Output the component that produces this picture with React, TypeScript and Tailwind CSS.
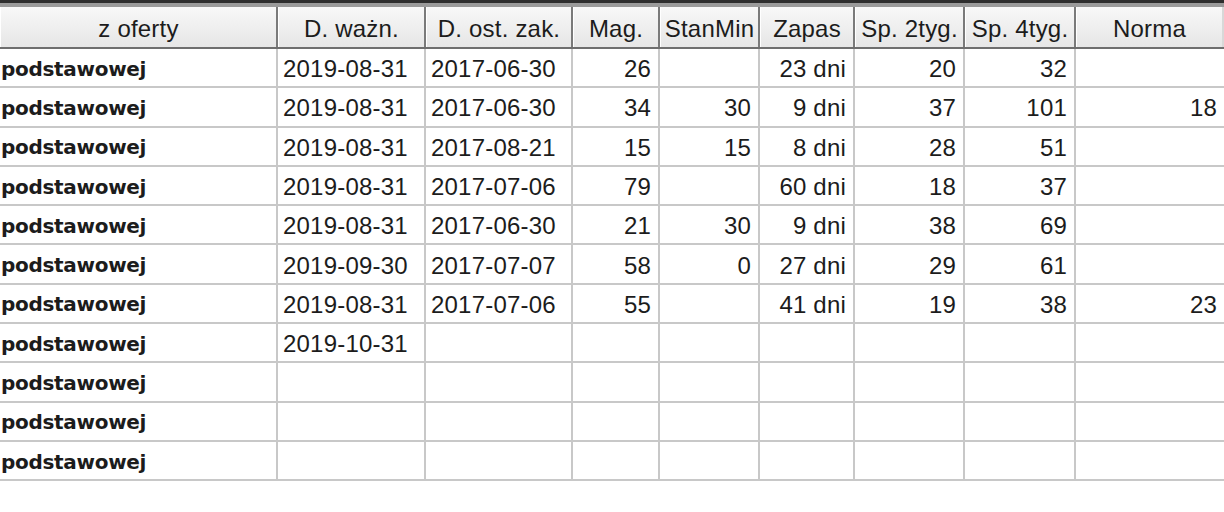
const cols = [
  { label: "z oferty", w: "w-[278px]" },
  { label: "D. ważn.", w: "w-[148px]" },
  { label: "D. ost. zak.", w: "w-[147px]" },
  { label: "Mag.", w: "w-[87px]" },
  { label: "StanMin", w: "w-[100px]" },
  { label: "Zapas", w: "w-[95px]" },
  { label: "Sp. 2tyg.", w: "w-[110px]" },
  { label: "Sp. 4tyg.", w: "w-[111px]" },
  { label: "Norma", w: "w-[148px]" },
];

type Row = string[];

const rows: Row[] = [
  ["2019-08-31", "2017-06-30", "26", "", "23 dni", "20", "32", ""],
  ["2019-08-31", "2017-06-30", "34", "30", "9 dni", "37", "101", "18"],
  ["2019-08-31", "2017-08-21", "15", "15", "8 dni", "28", "51", ""],
  ["2019-08-31", "2017-07-06", "79", "", "60 dni", "18", "37", ""],
  ["2019-08-31", "2017-06-30", "21", "30", "9 dni", "38", "69", ""],
  ["2019-09-30", "2017-07-07", "58", "0", "27 dni", "29", "61", ""],
  ["2019-08-31", "2017-07-06", "55", "", "41 dni", "19", "38", "23"],
  ["2019-10-31", "", "", "", "", "", "", ""],
  ["", "", "", "", "", "", "", ""],
  ["", "", "", "", "", "", "", ""],
  ["", "", "", "", "", "", "", ""],
];

const App = () => {
  return (
    <div className="w-[1224px] h-[512px] bg-white overflow-hidden font-['Liberation_Sans',Arial,sans-serif] text-[24px] tracking-[0.2px] text-[#1c1c1c]">
      <div className="h-[3px] bg-[#2e2e2e]" />
      <div className="h-[4px] bg-[#9a9a9a]" />
      {/* header */}
      <div className="flex h-[42px] bg-gradient-to-b from-[#f8f8f8] to-[#e6e6e6] border-b-2 border-[#6e6e6e]">
        {cols.map((c, i) => (
          <div
            key={c.label}
            className={`${c.w} flex items-center justify-center leading-none pt-[4px] ${
              i < cols.length - 1 ? "border-r-2 border-[#7a7a7a]" : "border-r-2 border-[#d8d8d8]"
            } border-l border-l-white`}
          >
            {c.label}
          </div>
        ))}
      </div>
      {/* body */}
      {rows.map((r, ri) => (
        <div key={ri} className="flex h-[39.3px] border-b-2 border-[#c8c8c8]">
          <div className="w-[278px] flex items-center pl-[1px] pt-[2px] border-r-2 border-[#c8c8c8] font-['DejaVu_Sans',sans-serif] font-bold text-[20px] tracking-[-0.3px]">
            podstawowej
          </div>
          {r.map((v, ci) => {
            const col = cols[ci + 1];
            const left = ci < 2;
            return (
              <div
                key={ci}
                className={`${col.w} flex items-center leading-none pt-[3px] ${
                  left ? "justify-start pl-[5px]" : "justify-end pr-[7px]"
                } ${ci < r.length - 1 ? "border-r-2 border-[#c8c8c8]" : ""}`}
              >
                {v}
              </div>
            );
          })}
        </div>
      ))}
    </div>
  );
};

export default App;
